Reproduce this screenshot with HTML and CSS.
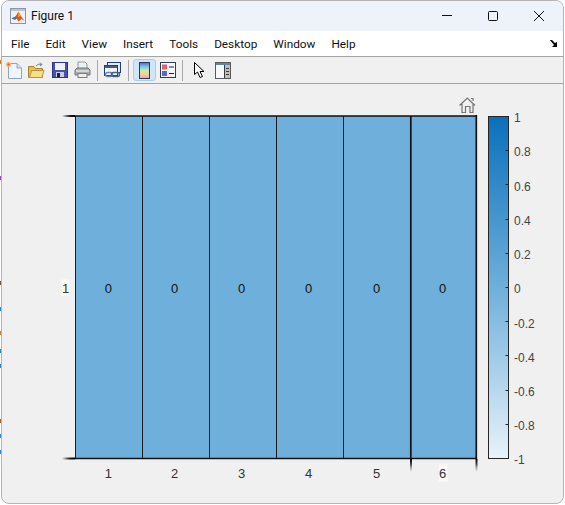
FILE: index.html
```html
<!DOCTYPE html>
<html lang="en">

<head>
    <meta charset="UTF-8">
    <title>Figure 1</title>
    <link rel="stylesheet" href="styles.css">
</head>

<body>
    <div class="window">
        <div class="titlebar">
            <svg class="app-icon" width="16" height="16" viewBox="0 0 16 16">
                <rect x="0.5" y="0.5" width="15" height="15" fill="#eef1f6" stroke="#8e959e" />
                <rect x="1" y="1" width="14" height="2" fill="#b9c4d2" />
                <path d="M1.500 10.500 L5.500 8.500 L8.500 3.500 L11 8 L14.500 13 L11.500 11 L8.500 13.500 L6.500 10.500 Z" fill="#dd5a1c" />
                <path d="M1.500 10.500 L5.500 8.500 L7 10 L5 12 Z" fill="#3b78b8" />
                <path d="M8.500 3.500 L11 8 L8 9 Z" fill="#f2a22e" />
            </svg>
            <span class="title">Figure 1</span>
            <div class="win-buttons">
                <svg width="12" height="12" viewBox="0 0 12 12"><path d="M1 5.500 H11" class="win-stroke" /></svg>
                <svg width="12" height="12" viewBox="0 0 12 12"><rect x="1.500" y="1.500" width="9" height="9" rx="1" class="win-stroke" /></svg>
                <svg width="12" height="12" viewBox="0 0 12 12"><path d="M1 1 L11 11 M11 1 L1 11" class="win-stroke" /></svg>
            </div>
        </div>

        <div class="menubar">
            <span>File</span>
            <span>Edit</span>
            <span>View</span>
            <span>Insert</span>
            <span>Tools</span>
            <span>Desktop</span>
            <span>Window</span>
            <span>Help</span>
            <svg class="menu-arrow" width="8" height="7" viewBox="0 0 8 7"><path d="M0 0 H2 L5 3 L7 2 V7 H2 L4 5 Z" fill="#000" /></svg>
        </div>

        <div class="toolbar">
            <span class="tool">
                <svg width="18" height="18" viewBox="0 0 18 18">
                    <path d="M3.500 2.500 H12 L16.500 7 V17.500 H3.500 Z" fill="#eef6fd" stroke="#8ea6c6" />
                    <path d="M12 2.500 V7 H16.500" fill="#cfe0f0" stroke="#8ea6c6" />
                    <circle cx="3.500" cy="3.500" r="2.500" fill="#f6b26b" />
                    <circle cx="3.500" cy="3.500" r="1" fill="#e0561c" />
                </svg>
            </span>
            <span class="tool">
                <svg width="17" height="17" viewBox="0 0 17 17">
                    <path d="M0.500 15.500 V4.500 H6 L7.500 6.500 H14.500 V15.500 Z" fill="#e9bd50" stroke="#a5842c" />
                    <path d="M1.500 15.500 L3.500 8.500 H16 L14 15.500 Z" fill="#f8dd8a" stroke="#b6953a" />
                    <path d="M8 4 Q10.500 1 13.500 2.500 M12 0.500 L14 2.500 L12 4" fill="none" stroke="#5f7f9f" />
                </svg>
            </span>
            <span class="tool">
                <svg width="16" height="16" viewBox="0 0 16 16">
                    <rect x="0.500" y="0.500" width="15" height="15" fill="#4750ad" stroke="#2f3484" />
                    <rect x="3" y="1" width="10" height="7" fill="#eef0fa" />
                    <rect x="4" y="10" width="8" height="5" fill="#c8cce0" />
                    <rect x="5" y="11" width="3" height="4" fill="#1c1f3f" />
                </svg>
            </span>
            <span class="tool">
                <svg width="17" height="18" viewBox="0 0 17 18">
                    <path d="M4 1 H11 L13 3 V8 H4 Z" fill="#eef1f4" stroke="#8f979f" />
                    <path d="M1 9 L3 7 H14 L16 9 V14 H1 Z" fill="#a9adb0" stroke="#72777b" />
                    <rect x="2" y="9" width="13" height="2" fill="#d3d6d8" />
                    <rect x="4" y="12.500" width="9" height="4" fill="#ececec" stroke="#7d7d7d" />
                </svg>
            </span>
            <span class="tool-sep"></span>
            <span class="tool">
                <svg width="17" height="18" viewBox="0 0 17 18">
                    <rect x="3.500" y="1.500" width="13" height="10" fill="#e2e9f2" stroke="#23406c" />
                    <rect x="0.500" y="4.500" width="13" height="10" fill="#f2f5fa" stroke="#23406c" />
                    <rect x="1" y="5" width="12" height="2" fill="#3d5f8c" />
                    <rect x="1.500" y="11.500" width="7" height="4" rx="2" fill="none" stroke="#6a87ab" stroke-width="1.500" />
                    <rect x="7.500" y="11.500" width="8" height="4" rx="2" fill="none" stroke="#43648e" stroke-width="1.500" />
                </svg>
            </span>
            <span class="tool-sep wide"></span>
            <span class="tool tool-on">
                <span class="mini-colorbar"></span>
            </span>
            <span class="tool">
                <svg width="16" height="16" viewBox="0 0 16 16">
                    <rect x="0.500" y="0.500" width="15" height="15" fill="#f4f6fa" stroke="#2e3d5e" />
                    <rect x="2" y="2.500" width="5" height="5" fill="#e0636b" />
                    <rect x="2" y="9" width="5" height="5" fill="#5a63d8" />
                    <path d="M9 5 H14 M9 11.500 H14" stroke="#222" />
                </svg>
            </span>
            <span class="tool-sep last"></span>
            <span class="tool">
                <svg width="11" height="16" viewBox="0 0 11 16">
                    <path d="M0.500 0.500 V12.500 L3.500 10 L6 15.500 L8.500 14.500 L6 9.500 H10 Z" fill="#fff" stroke="#000" />
                </svg>
            </span>
            <span class="tool">
                <svg width="16" height="17" viewBox="0 0 16 17">
                    <rect x="0.500" y="0.500" width="15" height="16" fill="#f8f8f8" stroke="#5a5a5a" />
                    <rect x="1" y="1" width="14" height="2" fill="#5b87ad" />
                    <rect x="9" y="3" width="6" height="13" fill="#bfbfbf" />
                    <path d="M9.500 3 V16 M11 6.500 H14 M11 9.500 H14 M11 12.500 H14" stroke="#3a3a3a" />
                </svg>
            </span>
        </div>

        <div class="figure">
            <svg class="plot" width="561" height="420" viewBox="2 84 561 420">
                <defs>
                    <linearGradient id="cbar" x1="0" y1="0" x2="0" y2="1">
                        <stop offset="0" stop-color="#0a70bb" />
                        <stop offset="0.5" stop-color="#6fafdb" />
                        <stop offset="1" stop-color="#e8f2fa" />
                    </linearGradient>
                    <linearGradient id="tickh" x1="0" y1="0" x2="1" y2="0">
                        <stop offset="0" stop-color="#000" stop-opacity="0" />
                        <stop offset="0.6" stop-color="#222" />
                        <stop offset="1" stop-color="#000" />
                    </linearGradient>
                    <linearGradient id="tickv" x1="0" y1="0" x2="0" y2="1">
                        <stop offset="0" stop-color="#000" />
                        <stop offset="0.4" stop-color="#444" />
                        <stop offset="1" stop-color="#888" stop-opacity="0" />
                    </linearGradient>
                </defs>

                <!-- home button -->
                <path class="home" d="M459.500 105.500 L467.300 98 L475 105.500 M462 104 V112.500 H465.500 V106.500 H470 V112.500 H473 V104 M471 98.500 H473 V101" />

                <!-- heatmap -->
                <rect x="75" y="116" width="401" height="342" fill="#6fafdb" />
                <path class="cell-line" d="M142.500 116 V458 M209.500 116 V458 M276.500 116 V458 M343.500 116 V458 M75.500 116 V458" />
                <path class="axis-heavy" d="M75 116 H477 M75 458.500 H477 M410.800 116 V459 M476.300 115 V459" />

                <!-- tick stubs -->
                <rect x="62" y="115" width="13" height="2" fill="url(#tickh)" />
                <rect x="62" y="457.500" width="13" height="2" fill="url(#tickh)" />
                <rect x="410" y="459" width="2" height="13" fill="url(#tickv)" />
                <rect x="475.500" y="459" width="2" height="13" fill="url(#tickv)" />

                <!-- cell values -->
                <text class="lbl cell" x="108.300" y="293">0</text>
                <text class="lbl cell" x="174.500" y="293">0</text>
                <text class="lbl cell" x="241.500" y="293">0</text>
                <text class="lbl cell" x="308.500" y="293">0</text>
                <text class="lbl cell" x="376.500" y="293">0</text>
                <text class="lbl cell" x="442.500" y="293">0</text>

                <!-- axis labels -->
                <rect class="lbl-bg" x="61.500" y="279.500" width="8" height="16" />
                <text class="lbl" x="65.500" y="293">1</text>
                <text class="lbl" x="108.300" y="478">1</text>
                <text class="lbl" x="174.500" y="478">2</text>
                <text class="lbl" x="241.500" y="478">3</text>
                <text class="lbl" x="308.500" y="478">4</text>
                <text class="lbl" x="376.500" y="478">5</text>
                <rect class="lbl-bg" x="439" y="464.500" width="8.500" height="17" />
                <text class="lbl" x="442.500" y="478">6</text>

                <!-- colorbar -->
                <rect x="488.500" y="116.500" width="20" height="342" fill="url(#cbar)" stroke="#262626" />
                <path class="cbar-ticks" d="M505.500 150.500 H508 M505.500 184.500 H508 M505.500 219.500 H508 M505.500 253.500 H508 M505.500 287.500 H508 M505.500 321.500 H508 M505.500 355.500 H508 M505.500 390.500 H508 M505.500 424.500 H508" />
                <text class="cbar-lbl" x="514" y="122">1</text>
                <text class="cbar-lbl" x="514" y="156">0.8</text>
                <text class="cbar-lbl" x="514" y="191">0.6</text>
                <text class="cbar-lbl" x="514" y="225">0.4</text>
                <text class="cbar-lbl" x="514" y="259">0.2</text>
                <text class="cbar-lbl" x="514" y="293">0</text>
                <text class="cbar-lbl" x="514" y="328">-0.2</text>
                <text class="cbar-lbl" x="514" y="362">-0.4</text>
                <text class="cbar-lbl" x="514" y="396">-0.6</text>
                <text class="cbar-lbl" x="514" y="430">-0.8</text>
                <text class="cbar-lbl" x="514" y="464">-1</text>
            </svg>
        </div>
    </div>
</body>

</html>
```

FILE: styles.css
```css
* {
    padding: 0;
    margin: 0;
    box-sizing: border-box;
}

/* bits of the desktop showing past the window's left edge */
body {
    font-family: "Liberation Sans", Arial, sans-serif;
    overflow: hidden;
    background-color: #fff;
    background-repeat: no-repeat;
    background-image:
        linear-gradient(#c8813c, #c8813c),
        linear-gradient(#a040c0, #a040c0),
        linear-gradient(#8a4a3a, #8a4a3a),
        linear-gradient(#2f86d0, #2f86d0),
        linear-gradient(#c8813c, #c8813c),
        linear-gradient(#2f86d0, #2f86d0),
        linear-gradient(#2f86d0, #2f86d0),
        linear-gradient(#a0622c, #a0622c),
        linear-gradient(#2f86d0, #2f86d0),
        linear-gradient(#2f86d0, #2f86d0);
    background-size: 1px 4px;
    background-position:
        0 60px,
        0 176px,
        0 281px,
        0 307px,
        0 331px,
        0 349px,
        0 364px,
        0 419px,
        0 434px,
        0 450px;
}

.window {
    width: 563px;
    height: 504px;
    margin-left: 1px;
    border: 1px solid #b5b5b5;
    border-radius: 8px;
    overflow: hidden;
    background: #f0f0f0;
}

.titlebar {
    height: 30px;
    display: flex;
    align-items: center;
    padding-left: 8px;
    gap: 5px;
    background: #eef2fa;
}

.title {
    font-family: Roboto, "Noto Sans", sans-serif;
    font-size: 12px;
    color: #111;
}

.win-buttons {
    margin-left: auto;
    display: flex;
    gap: 34px;
    padding-right: 18px;
}

.win-stroke {
    fill: none;
    stroke: #111;
    stroke-width: 1;
}

.menubar {
    height: 26px;
    display: flex;
    align-items: center;
    padding-left: 9px;
    gap: 16px;
    background: #fff;
    border-bottom: 1px solid #a3a3a3;
    font-family: Roboto, "Noto Sans", sans-serif;
    font-size: 11.8px;
    color: #111;
}

.menu-arrow {
    margin-left: auto;
    margin-right: 5px;
}

.toolbar {
    height: 27px;
    display: flex;
    align-items: center;
    background: #f0f0f0;
    border-bottom: 1px solid #a3a3a3;
}

.tool {
    width: 23px;
    height: 22px;
    display: flex;
    align-items: center;
    justify-content: center;
}

.tool-sep {
    width: 1px;
    height: 21px;
    background: #a8a8a8;
    margin: 0 3px;
}

.tool-sep.wide {
    margin: 0 4px;
}

.tool-sep.last {
    margin-right: 5px;
}

.tool-on {
    background: #cfe5f8;
    border: 1px solid #a5d0f2;
    border-radius: 3px;
}

.mini-colorbar {
    width: 11px;
    height: 17px;
    border: 1px solid #2c3a5e;
    background: linear-gradient(#5f6ad8, #7fc8e0, #c8e8b0, #f6d0a0, #f0a8a0);
}

.figure {
    height: 420px;
}

.plot {
    display: block;
}

.home {
    fill: none;
    stroke: #757575;
    stroke-width: 1.2;
}

.cell-line {
    fill: none;
    stroke: #1c1c1c;
    stroke-width: 1;
}

.axis-heavy {
    fill: none;
    stroke: #111;
    stroke-width: 1.7;
}

.lbl {
    font-size: 13px;
    fill: #333;
    text-anchor: middle;
}

.lbl-bg {
    fill: #fafafa;
}

.cell {
    fill: #111;
}

.cbar-lbl {
    font-size: 12px;
    fill: #444;
}

.cbar-ticks {
    fill: none;
    stroke: #262626;
}
```
